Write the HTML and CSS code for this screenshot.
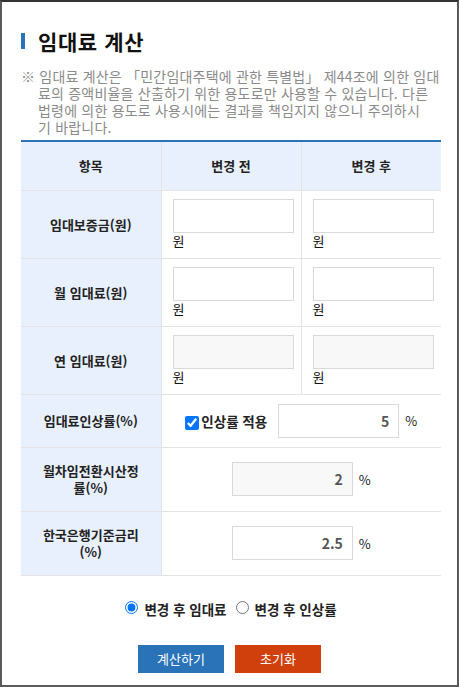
FILE: index.html
```html
<!DOCTYPE html>
<html lang="ko">
<head>
    <meta charset="UTF-8">
    <meta name="viewport" content="width=device-width, initial-scale=1.0">
    <title>임대료 계산</title>
    <link rel="stylesheet" href="styles.css">
</head>
<body>
<div class="popup">
    <h2 class="title">임대료 계산</h2>
    <p class="note">※ 임대료 계산은 「민간임대주택에 관한 특별법」 제44조에 의한 임대<br>료의 증액비율을 산출하기 위한 용도로만 사용할 수 있습니다. 다른<br>법령에 의한 용도로 사용시에는 결과를 책임지지 않으니 주의하시<br>기 바랍니다.</p>

    <table class="calc">
        <thead>
            <tr>
                <th>항목</th>
                <th>변경 전</th>
                <th>변경 후</th>
            </tr>
        </thead>
        <tbody>
            <tr class="money">
                <th>임대보증금(원)</th>
                <td><input type="text" id="depositBefore"><span class="unit">원</span></td>
                <td><input type="text" id="depositAfter"><span class="unit">원</span></td>
            </tr>
            <tr class="money">
                <th>월 임대료(원)</th>
                <td><input type="text" id="monthBefore"><span class="unit">원</span></td>
                <td><input type="text" id="monthAfter"><span class="unit">원</span></td>
            </tr>
            <tr class="money">
                <th>연 임대료(원)</th>
                <td><input type="text" id="yearBefore" class="readonly" readonly><span class="unit">원</span></td>
                <td><input type="text" id="yearAfter" class="readonly" readonly><span class="unit">원</span></td>
            </tr>
            <tr class="rate rate-short">
                <th>임대료인상률(%)</th>
                <td colspan="2">
                    <div class="rate-box">
                        <label class="check"><input type="checkbox" id="applyRate" checked>인상률 적용</label>
                        <input type="text" id="raiseRate" class="num" value="5">
                        <span class="pct">%</span>
                    </div>
                </td>
            </tr>
            <tr class="rate">
                <th>월차임전환시산정<br>률(%)</th>
                <td colspan="2">
                    <div class="rate-box">
                        <input type="text" id="convRate" class="num readonly" value="2" readonly>
                        <span class="pct">%</span>
                    </div>
                </td>
            </tr>
            <tr class="rate">
                <th>한국은행기준금리<br>(%)</th>
                <td colspan="2">
                    <div class="rate-box">
                        <input type="text" id="baseRate" class="num" value="2.5">
                        <span class="pct">%</span>
                    </div>
                </td>
            </tr>
        </tbody>
    </table>

    <div class="mode">
        <label><input type="radio" name="mode" value="rent" checked>변경 후 임대료</label>
        <label><input type="radio" name="mode" value="rate">변경 후 인상률</label>
    </div>

    <div class="buttons">
        <button type="button" class="btn btn-calc">계산하기</button>
        <button type="button" class="btn btn-reset">초기화</button>
    </div>
</div>
</body>
</html>
```

FILE: styles.css
```css
* {
    box-sizing: border-box;
}
html, body {
    margin: 0;
    height: 100%;
}
body {
    font-family: "Noto Sans CJK KR", "Noto Sans", sans-serif;
    color: #222;
}
.popup {
    height: 100%;
    border: 2px solid #5a5a5a;
    border-top-color: #333;
    padding: 27px 0 0 19px;
}
.title {
    position: relative;
    margin: 0 0 15px;
    padding-left: 17px;
    font-size: 21px;
    line-height: 24px;
    font-weight: bold;
    letter-spacing: 0.6px;
    color: #111;
}
.title::before {
    content: "";
    position: absolute;
    left: 0;
    top: 4px;
    width: 4px;
    height: 16px;
    background: #2a73b8;
}
.note {
    width: 432px;
    margin: 0 0 4px;
    padding-left: 17px;
    text-indent: -17px;
    font-size: 14px;
    line-height: 17px;
    letter-spacing: 0.2px;
    color: #8a8a8a;
}
.calc {
    width: 420px;
    border-collapse: collapse;
    table-layout: fixed;
    border-top: 2px solid #2a73b8;
    border-bottom: 1px solid #e3e3e3;
}
.calc th, .calc td {
    border: 1px solid #e3e3e3;
    font-size: 13px;
    padding: 0;
}
.calc tr > :first-child {
    border-left: none;
    width: 140px;
}
.calc tr > :last-child {
    border-right: none;
}
.calc thead th {
    height: 49px;
    background: #e8f0fd;
    font-weight: bold;
    border-top: none;
}
.calc tbody th {
    background: #e8f0fd;
    font-weight: bold;
    line-height: 17px;
}
.money td {
    height: 68px;
    padding: 8px 7px 6px 11px;
    vertical-align: top;
}
.money input {
    display: block;
    width: 121px;
    height: 34px;
    border: 1px solid #d9d9d9;
    background: #fff;
}
.calc input.readonly {
    background: #f8f8f8;
}
.unit {
    display: block;
    font-size: 13px;
    line-height: 15px;
    color: #111;
}
.rate td {
    height: 64px;
}
.rate-short td, .rate-short th {
    height: 53px;
}
.rate-box {
    display: flex;
    align-items: center;
    justify-content: center;
}
.check {
    display: flex;
    align-items: center;
    margin-right: 11px;
    font-weight: bold;
    font-size: 13.5px;
}
.check input {
    width: 14px;
    height: 14px;
    margin: 4px 2px 0 0;
}
.num {
    width: 121px;
    height: 34px;
    border: 1px solid #d9d9d9;
    padding: 0 9px;
    text-align: right;
    font-family: inherit;
    font-size: 14px;
    font-weight: bold;
    color: #555;
}
.pct {
    margin-left: 6px;
    font-size: 13px;
    width: 12px;
}
.mode {
    width: 420px;
    display: flex;
    justify-content: center;
    gap: 9px;
    margin-top: 23px;
    font-size: 13.5px;
    font-weight: bold;
}
.mode label {
    display: flex;
    align-items: center;
}
.mode input {
    margin: 0 6px 2px 0;
    width: 13px;
    height: 13px;
}
.buttons {
    width: 420px;
    display: flex;
    justify-content: center;
    gap: 11px;
    margin-top: 26px;
    padding-right: 3px;
}
.btn {
    width: 86px;
    height: 28px;
    border: none;
    color: #fff;
    font-family: inherit;
    font-size: 13px;
}
.btn-calc {
    background: #2a73b8;
}
.btn-reset {
    background: #d0400c;
}
```
